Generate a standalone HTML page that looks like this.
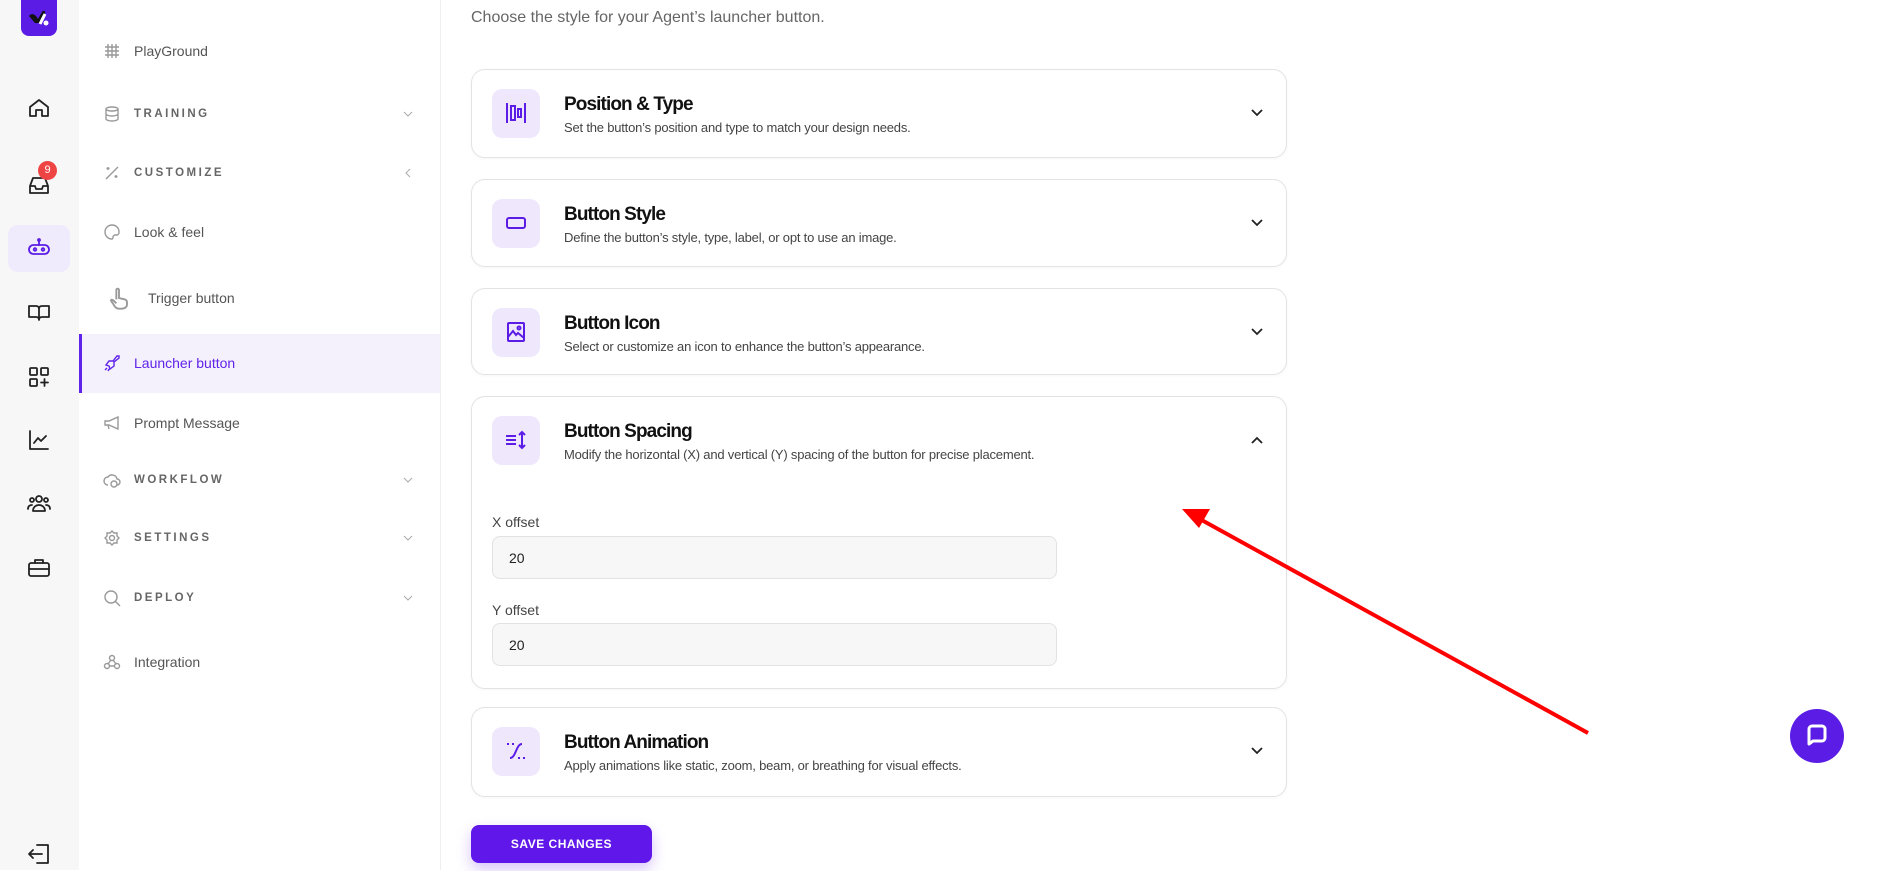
<!DOCTYPE html>
<html><head><meta charset="utf-8"><style>
*{box-sizing:border-box;margin:0;padding:0}
body{width:1896px;height:870px;overflow:hidden;background:#fff;font-family:"Liberation Sans",sans-serif;position:relative;color:#111}
.rail{position:absolute;left:0;top:0;width:79px;height:870px;background:#f7f7f8}
.logo{position:absolute;left:21px;top:0;width:36px;height:36px;background:#5b1ce6;border-radius:0 0 8px 8px}
.ri{position:absolute;left:27px;width:24px;height:24px}
.ri svg{width:24px;height:24px;fill:none;stroke:#222;stroke-width:1.8;stroke-linecap:round;stroke-linejoin:round}
.act{position:absolute;left:8px;top:225px;width:62px;height:47px;background:#efeafc;border-radius:10px}
.badge{position:absolute;left:38px;top:161px;width:19px;height:19px;border-radius:50%;background:#ef4444;color:#fff;font-size:11px;text-align:center;line-height:19px}
.side{position:absolute;left:79px;top:0;width:362px;height:870px;border-right:1px solid #eee}
.it{position:absolute;left:0;width:361px;height:30px;display:flex;align-items:center;font-size:14px;color:#555}
.it .ic{position:absolute;left:24px;width:18px;height:18px}
.it .ic svg{width:18px;height:18px;fill:none;stroke:#999;stroke-width:1.4}
.it .tx{position:absolute;left:55px}
.it.cap .tx{font-size:11.5px;font-weight:bold;letter-spacing:2.5px;color:#666}
.it .ch{position:absolute;left:324px;width:10px;height:10px}
.launch{position:absolute;left:0;top:334px;width:361px;height:59px;background:#f4f1fd;border-left:3px solid #6023e9}
.sub{position:absolute;left:471px;top:9px;font-size:16px;color:#666}
.card{position:absolute;left:471px;width:816px;border:1px solid #e3e3e3;border-radius:14px;background:#fff;box-shadow:0 1px 3px rgba(0,0,0,.04)}
.ib{position:absolute;left:20px;top:19px;width:48px;height:49px;background:#efe8fd;border-radius:10px}
.ib svg{position:absolute;left:12px;top:12px;width:24px;height:24px;fill:none;stroke:#5b1ce6;stroke-width:2}
.ttl{position:absolute;left:92px;top:24px;font-size:19px;font-weight:bold;letter-spacing:-0.9px;color:#111}
.dsc{position:absolute;left:92px;top:50px;font-size:13px;color:#444;letter-spacing:-0.2px}
.chev{position:absolute;left:778px;top:36px;width:14px;height:14px}
.lbl{position:absolute;left:20px;font-size:14px;color:#444}
.inp{position:absolute;left:20px;width:565px;height:43px;background:#f7f7f7;border:1px solid #e2e2e2;border-radius:8px;font-size:14px;padding:13px 16px;color:#222}
.save{position:absolute;left:471px;top:825px;width:181px;height:38px;background:#5f17ea;border-radius:8px;color:#fff;font-size:12px;font-weight:bold;text-align:center;line-height:38px;letter-spacing:.5px;box-shadow:0 6px 14px rgba(95,23,234,.25)}
.bub{position:absolute;left:1790px;top:709px;width:54px;height:54px;border-radius:50%;background:#5b1ce6}
</style></head><body>
<div class="rail">
<div class="logo"><svg width="36" height="36" viewBox="0 0 36 36"><path d="M8 16c2-3 5-2 7 0l2 3 4-7c1-2 4-1 3 1l-5 10h-5z" fill="#111"/><circle cx="25" cy="23" r="2.5" fill="#fff"/><path d="M19 24l5-10" stroke="#fff" stroke-width="3"/></svg></div>
<div class="act"></div>
<div class="ri" style="top:96px"><svg viewBox="0 0 24 24"><path d="M3 11l9-7 9 7v9h-6v-6h-6v6H3z"/></svg></div>
<div class="ri" style="top:173px"><svg viewBox="0 0 24 24"><path d="M3 13l3-8h12l3 8v7H3z M3 13h5l1 3h6l1-3h5"/></svg></div>
<div class="badge">9</div>
<div class="ri" style="top:236px"><svg viewBox="0 0 24 24" style="stroke:#5b1ce6"><rect x="2" y="9" width="20" height="9" rx="4.5"/><circle cx="8" cy="13.5" r="1.3"/><circle cx="16" cy="13.5" r="1.3"/><path d="M12 9V5"/><circle cx="12" cy="4" r="1"/></svg></div>
<div class="ri" style="top:300px"><svg viewBox="0 0 24 24"><path d="M2 6h7c2 0 3 1 3 3v11c0-2-1-3-3-3H2zM22 6h-7c-2 0-3 1-3 3v11c0-2 1-3 3-3h7z"/></svg></div>
<div class="ri" style="top:365px"><svg viewBox="0 0 24 24"><rect x="3" y="3" width="7" height="7" rx="1"/><rect x="14" y="3" width="7" height="7" rx="1"/><rect x="3" y="14" width="7" height="7" rx="1"/><path d="M17.5 14v7M14 17.5h7"/></svg></div>
<div class="ri" style="top:428px"><svg viewBox="0 0 24 24"><path d="M3 3v18h18M7 15l4-5 3 3 5-5"/></svg></div>
<div class="ri" style="top:491px"><svg viewBox="0 0 24 24"><circle cx="12" cy="8" r="3"/><circle cx="5" cy="9" r="2"/><circle cx="19" cy="9" r="2"/><path d="M6 20c0-4 3-6 6-6s6 2 6 6zM1 18c0-3 2-4 4-4M23 18c0-3-2-4-4-4"/></svg></div>
<div class="ri" style="top:556px"><svg viewBox="0 0 24 24"><rect x="2" y="7" width="20" height="13" rx="2"/><path d="M8 7V4h8v3M2 13h20"/></svg></div>
<div class="ri" style="top:842px"><svg viewBox="0 0 24 24"><path d="M10 3h11v18H10M2 12h13M6 8l-4 4 4 4"/></svg></div>
</div>
<div class="side">
<div class="it" style="top:36px"><span class="ic"><svg viewBox="0 0 18 18"><path d="M5 2v14M9 2v14M13 2v14M2 5h14M2 9h14M2 13h14"/></svg></span><span class="tx">PlayGround</span></div>
<div class="it cap" style="top:99px"><span class="ic"><svg viewBox="0 0 18 18"><ellipse cx="9" cy="4" rx="6" ry="2"/><path d="M3 4v10c0 1 3 2 6 2s6-1 6-2V4M3 9c0 1 3 2 6 2s6-1 6-2"/></svg></span><span class="tx">TRAINING</span><svg class="ch" viewBox="0 0 10 10" style="top:10px"><path d="M1 3l4 4 4-4" stroke="#aaa" fill="none"/></svg></div>
<div class="it cap" style="top:158px"><span class="ic"><svg viewBox="0 0 18 18"><path d="M3 15L15 3M5 3v3M3.5 4.5h3M13 11v3M11.5 12.5h3"/></svg></span><span class="tx">CUSTOMIZE</span><svg class="ch" viewBox="0 0 10 10" style="top:10px"><path d="M7 1L3 5l4 4" stroke="#aaa" fill="none"/></svg></div>
<div class="it" style="top:217px"><span class="ic"><svg viewBox="0 0 18 18"><path d="M9 2a7 7 0 1 0 0 14c1 0 1-1 1-2s1-2 2-2h2c1 0 2-1 2-3 0-4-3-7-7-7z"/></svg></span><span class="tx">Look &amp; feel</span></div>
<div class="it" style="top:283px"><span class="ic" style="left:28px;width:24px;height:24px"><svg viewBox="0 0 18 18" style="width:24px;height:24px"><path d="M7 10V3a1 1 0 0 1 2 0v6l4 1c1 0 2 1 2 2v2c0 2-2 3-4 3H9c-2 0-3-1-4-3l-2-3c0-1 1-1 2 0l2 2"/></svg></span><span class="tx" style="left:69px">Trigger button</span></div>
<div class="launch"></div>
<div class="it" style="top:348px"><span class="ic"><svg viewBox="0 0 18 18" style="stroke:#6023e9"><path d="M6 12l-3-1 3-4h4l4-5h2v2l-5 4v4l-4 3-1-3zM4 14l-2 2M6 15l-1 2"/></svg></span><span class="tx" style="color:#6023e9">Launcher button</span></div>
<div class="it" style="top:408px"><span class="ic"><svg viewBox="0 0 18 18"><path d="M2 7h4l9-4v12l-9-4H2zM5 11l1 4"/></svg></span><span class="tx">Prompt Message</span></div>
<div class="it cap" style="top:465px"><span class="ic"><svg viewBox="0 0 18 18"><path d="M5 14a4 4 0 0 1 0-8 5 5 0 0 1 9 2 3 3 0 0 1 0 6"/><circle cx="11" cy="13" r="3"/></svg></span><span class="tx">WORKFLOW</span><svg class="ch" viewBox="0 0 10 10" style="top:10px"><path d="M1 3l4 4 4-4" stroke="#aaa" fill="none"/></svg></div>
<div class="it cap" style="top:523px"><span class="ic"><svg viewBox="0 0 18 18"><circle cx="9" cy="9" r="2.5"/><path d="M9 2l2 2h3v3l2 2-2 2v3h-3l-2 2-2-2H4v-3L2 9l2-2V4h3z"/></svg></span><span class="tx">SETTINGS</span><svg class="ch" viewBox="0 0 10 10" style="top:10px"><path d="M1 3l4 4 4-4" stroke="#aaa" fill="none"/></svg></div>
<div class="it cap" style="top:583px"><span class="ic"><svg viewBox="0 0 18 18"><circle cx="8" cy="8" r="6"/><path d="M12 12l5 5"/></svg></span><span class="tx">DEPLOY</span><svg class="ch" viewBox="0 0 10 10" style="top:10px"><path d="M1 3l4 4 4-4" stroke="#aaa" fill="none"/></svg></div>
<div class="it" style="top:647px"><span class="ic"><svg viewBox="0 0 18 18"><circle cx="9" cy="5" r="2.5"/><circle cx="4" cy="13" r="2.5"/><circle cx="14" cy="13" r="2.5"/><path d="M8 7l-3 4M10 7l3 4M6.5 13h5"/></svg></span><span class="tx">Integration</span></div>
</div>
<div class="sub">Choose the style for your Agent’s launcher button.</div>

<div class="card" style="top:69px;height:89px"><div class="ib"><svg viewBox="0 0 24 24"><path d="M3 2v20M21 2v20"/><rect x="7" y="5" width="4" height="14"/><rect x="14" y="8" width="3" height="8"/></svg></div><div class="ttl">Position &amp; Type</div><div class="dsc">Set the button’s position and type to match your design needs.</div><svg class="chev" viewBox="0 0 14 14"><path d="M2 4l5 5 5-5" stroke="#222" stroke-width="1.8" fill="none"/></svg></div>

<div class="card" style="top:179px;height:88px"><div class="ib"><svg viewBox="0 0 24 24"><rect x="3" y="7" width="18" height="10" rx="2"/></svg></div><div class="ttl">Button Style</div><div class="dsc">Define the button’s style, type, label, or opt to use an image.</div><svg class="chev" viewBox="0 0 14 14"><path d="M2 4l5 5 5-5" stroke="#222" stroke-width="1.8" fill="none"/></svg></div>

<div class="card" style="top:288px;height:87px"><div class="ib"><svg viewBox="0 0 24 24"><rect x="4" y="3" width="16" height="18" rx="1"/><path d="M4 17l5-6 3 4 2-2 6 5"/><circle cx="15" cy="8" r="1.5"/></svg></div><div class="ttl">Button Icon</div><div class="dsc">Select or customize an icon to enhance the button’s appearance.</div><svg class="chev" viewBox="0 0 14 14"><path d="M2 4l5 5 5-5" stroke="#222" stroke-width="1.8" fill="none"/></svg></div>

<div class="card" style="top:396px;height:293px"><div class="ib"><svg viewBox="0 0 24 24"><path d="M2 8h10M2 12h10M2 16h10M18 4v16M15 7l3-3 3 3M15 17l3 3 3-3"/></svg></div><div class="ttl">Button Spacing</div><div class="dsc">Modify the horizontal (X) and vertical (Y) spacing of the button for precise placement.</div><svg class="chev" viewBox="0 0 14 14"><path d="M2 10l5-5 5 5" stroke="#222" stroke-width="1.8" fill="none"/></svg>
<div class="lbl" style="top:117px">X offset</div><div class="inp" style="top:139px">20</div>
<div class="lbl" style="top:205px">Y offset</div><div class="inp" style="top:226px">20</div></div>

<div class="card" style="top:707px;height:90px"><div class="ib"><svg viewBox="0 0 24 24"><path d="M3 5h2M8 5h2M14 19h2M19 19h2M18 5c-6 0-6 14-12 14"/></svg></div><div class="ttl">Button Animation</div><div class="dsc">Apply animations like static, zoom, beam, or breathing for visual effects.</div><svg class="chev" viewBox="0 0 14 14"><path d="M2 4l5 5 5-5" stroke="#222" stroke-width="1.8" fill="none"/></svg></div>

<div class="save">SAVE CHANGES</div>
<div class="bub"><svg width="54" height="54" viewBox="0 0 54 54"><path d="M19 20a3 3 0 0 1 3-3h10a3 3 0 0 1 3 3v9a3 3 0 0 1-3 3h-9l-4 3z" fill="none" stroke="#fff" stroke-width="3" stroke-linejoin="round"/></svg></div>
<svg style="position:absolute;left:0;top:0" width="1896" height="870"><line x1="1588" y1="733" x2="1198" y2="518" stroke="#f00" stroke-width="4"/><polygon points="1182,509 1210,509 1199,528" fill="#f00"/></svg>
</body></html>
